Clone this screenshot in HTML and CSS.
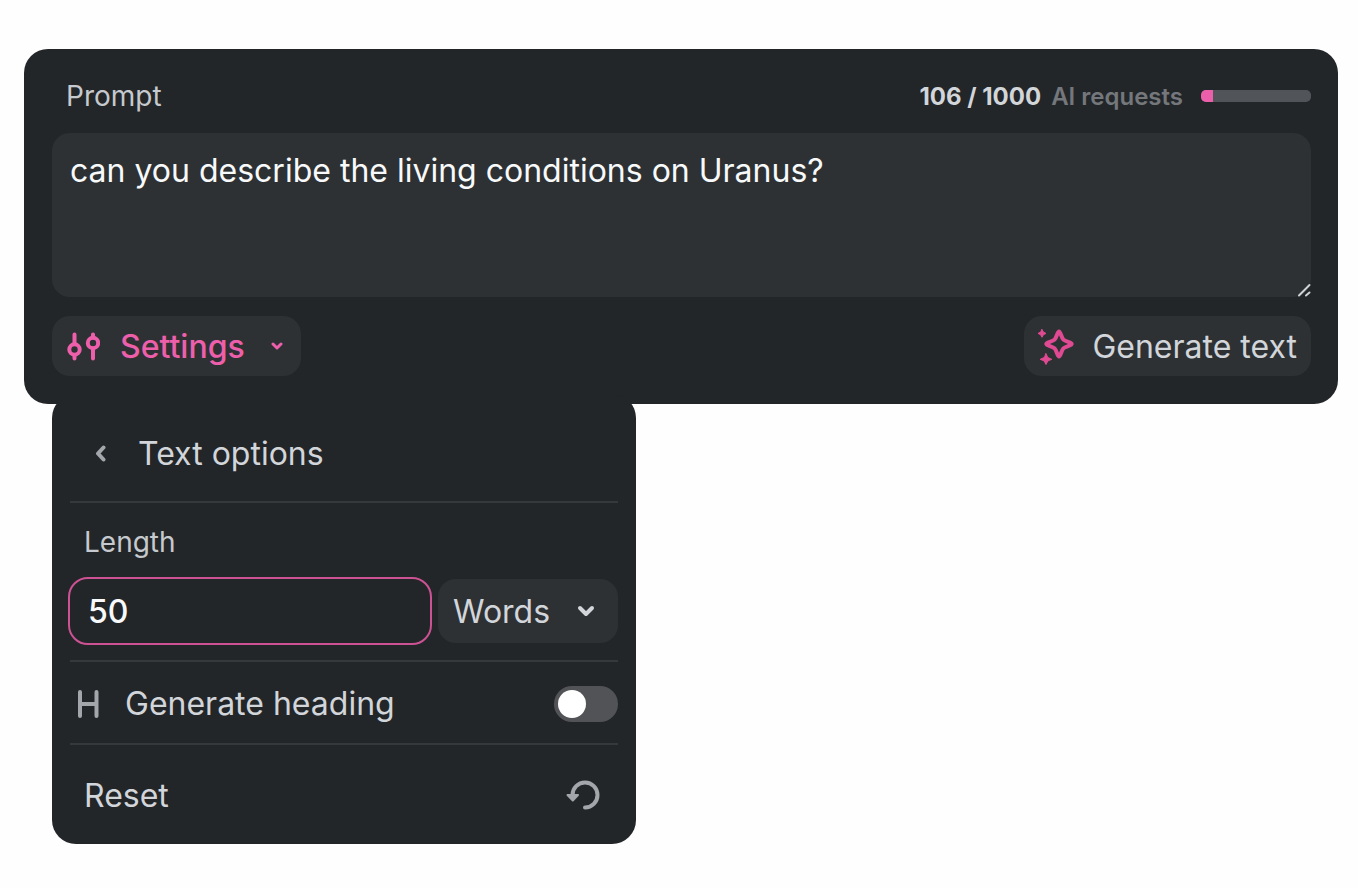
FILE: index.html
```html
<!DOCTYPE html>
<html lang="en">
<head>
<meta charset="utf-8">
<meta name="viewport" content="width=device-width, initial-scale=1">
<title>AI prompt</title>
<link rel="stylesheet" href="styles.css">
</head>
<body>
<main class="page">
  <section class="panel">
    <header class="panel-head">
      <label class="label" for="prompt">Prompt</label>
      <div class="usage">
        <span class="usage-text"><strong class="usage-count">106 / 1000</strong> AI requests</span>
        <div class="meter" role="progressbar" aria-label="AI requests used" aria-valuenow="106" aria-valuemin="0" aria-valuemax="1000">
          <div class="meter-fill" style="width: 10.6%"></div>
        </div>
      </div>
    </header>
    <div class="prompt-box">
      <textarea class="prompt" id="prompt" spellcheck="false">can you describe the living conditions on Uranus?</textarea>
      <svg class="grip" width="14" height="14" viewBox="0 0 14 14" aria-hidden="true"><path d="M2 12.500 12.500 2M9 12.500 12.500 9.500"/></svg>
    </div>
    <footer class="actions">
      <button class="btn btn-settings" type="button" aria-expanded="true">
        <svg class="icon-sliders" width="34" height="30" viewBox="0 0 34 30" aria-hidden="true"><circle cx="8.500" cy="17.500" r="5.200"/><circle cx="27" cy="11" r="5.200"/><path d="M8.500 2.500V12M8.500 23v3.500M27 2.500v3M27 16.500v10"/></svg>
        <span>Settings</span>
        <svg class="chevron-small" width="12" height="10" viewBox="0 0 12 10" aria-hidden="true"><path d="m2 2 4 4 4-4"/></svg>
      </button>
      <button class="btn btn-generate" type="button">
        <svg class="icon-sparkle" width="38" height="38" viewBox="0 0 38 38" aria-hidden="true"><path class="star" d="M21 3.500c1.600 0 2.300 6 4.400 8.100s8.300 2.700 8.300 4.300-6.200 2.400-8.300 4.500-2.800 8.100-4.400 8.100-2.300-6-4.400-8.100-8.300-2.900-8.300-4.500 6.200-2.200 8.300-4.300 2.800-8.100 4.400-8.100z"/><path class="spark" d="M4 1.500 5.400 4.100 8 5.400 5.400 6.700 4 9.300 2.600 6.700 0 5.400 2.600 4.100zM8 25.700l1.800 3.800 4 1.800-4 1.700-1.800 3.500-1.800-3.500-4-1.700 4-1.800z"/></svg>
        <span>Generate text</span>
      </button>
    </footer>
  </section>

  <section class="menu" aria-label="Text options">
    <header class="menu-head">
      <button class="back" type="button" aria-label="Back">
        <svg width="12" height="18" viewBox="0 0 12 18" aria-hidden="true"><path d="M9.500 2.500 4 8.500l5.500 6"/></svg>
      </button>
      <h2 class="menu-title">Text options</h2>
    </header>
    <div class="length">
      <label class="label length-label" for="length">Length</label>
      <div class="fields">
        <input class="amount" id="length" type="text" inputmode="numeric" value="50">
        <div class="unit-box">
          <select class="unit" aria-label="Length unit"><option>Words</option></select>
          <svg class="chevron" width="18" height="12" viewBox="0 0 18 12" aria-hidden="true"><path d="m3 3 6 6 6-6"/></svg>
        </div>
      </div>
    </div>
    <div class="heading-row">
      <svg class="icon-h" width="24" height="30" viewBox="0 0 24 30" aria-hidden="true"><path d="M4 3v24M20.500 3v24M4 15H20.500"/></svg>
      <label class="row-text" for="heading">Generate heading</label>
      <input class="toggle" id="heading" type="checkbox" role="switch">
    </div>
    <button class="reset" type="button">
      <span>Reset</span>
      <svg class="icon-reset" width="34" height="32" viewBox="0 0 34 32" aria-hidden="true"><path class="arc" d="M6.500 15A12.500 12.500 0 1 1 19 27.500"/><path class="head" d="M1.500 15h10.500l-5.200 5.500z"/></svg>
    </button>
  </section>
</main>
</body>
</html>
```

FILE: styles.css
```css
:root {
  --surface: #232629;
  --field: #2e3134;
  --line: #36393c;
  --text: #d2d5d9;
  --muted: #a3a6aa;
  --pink: #ee5fab;
}

* { box-sizing: border-box; }

body {
  margin: 0;
  background: #fefefe;
  color: var(--text);
  font-family: Inter, "Liberation Sans", sans-serif;
  font-size: 32px;
  line-height: 40px;
}

button, input, select, textarea {
  margin: 0;
  border: 0;
  color: inherit;
  font: inherit;
}

button { cursor: pointer; }

svg {
  display: block;
  flex: none;
  fill: none;
  stroke: currentColor;
  stroke-linecap: round;
  stroke-linejoin: round;
}

.page { padding: 49px 20px 45px 24px; }

.panel {
  padding: 27px 27px 28px 28px;
  border-radius: 24px;
  background: var(--surface);
}

.panel-head {
  display: flex;
  align-items: center;
  justify-content: space-between;
  padding-left: 14px;
  margin-bottom: 17px;
}

.label {
  font-size: 28px;
  color: #c6c9cd;
}

.usage {
  display: flex;
  align-items: center;
  gap: 18px;
}

.usage-text {
  padding-top: 2px;
  color: #74777b;
  font-size: 24px;
  font-weight: 600;
  line-height: 38px;
}

.usage-count {
  margin-right: 4px;
  color: var(--text);
  font-weight: 700;
}

.meter {
  width: 110px;
  height: 12px;
  overflow: hidden;
  border-radius: 5px;
  background: #515458;
}

.meter-fill {
  height: 100%;
  background: var(--pink);
}

.prompt-box {
  position: relative;
  margin-bottom: 19px;
}

.prompt {
  display: block;
  width: 100%;
  height: 164px;
  padding: 18px;
  border-radius: 18px;
  outline: 0;
  resize: none;
  background: var(--field);
  color: #f8f9fa;
}

.grip {
  position: absolute;
  right: 0;
  bottom: 0;
  color: #d0d2d4;
  stroke-width: 2;
}

.actions {
  display: flex;
  justify-content: space-between;
}

.btn {
  display: flex;
  align-items: center;
  height: 60px;
  padding: 2px 14px 0;
  border-radius: 18px;
  background: var(--field);
}

.btn-settings {
  gap: 20px;
  padding: 2px 18px 0 14px;
  color: var(--pink);
  font-weight: 500;
}

.icon-sliders { stroke-width: 4; }

.chevron-small {
  margin-left: 6px;
  stroke-width: 3;
}

.btn-generate { gap: 16px; }

.icon-sparkle {
  overflow: visible;
  color: #df4a92;
}

.star { stroke-width: 4; }

.spark {
  fill: currentColor;
  stroke-width: 1;
}

.menu {
  width: 584px;
  max-width: calc(100% - 56px);
  margin: -10px 28px 0;
  padding: 0 18px;
  border-radius: 24px;
  background: var(--surface);
}

.menu-head {
  display: flex;
  align-items: center;
  gap: 14px;
  padding: 40px 16px 27px 14px;
  border-bottom: 2px solid var(--line);
}

.back {
  display: grid;
  place-items: center;
  width: 40px;
  height: 40px;
  padding: 0 8px 0 0;
  background: none;
  color: var(--muted);
  stroke-width: 4;
}

.menu-title {
  margin: 0;
  font-size: 32px;
  font-weight: 400;
}

.length {
  padding: 19px 0 17px;
  border-bottom: 2px solid var(--line);
}

.length-label {
  display: block;
  padding-left: 14px;
  margin-bottom: 17px;
}

.fields {
  display: grid;
  grid-template-columns: 2fr 180px;
  gap: 8px;
}

.amount {
  width: 100%;
  height: 64px;
  padding: 0 18px;
  border-radius: 18px;
  outline: 2px solid #cc5294;
  background: var(--surface);
  color: #f8f9fa;
  font-weight: 500;
}

.unit-box { position: relative; }

.unit {
  width: 100%;
  height: 64px;
  padding: 2px 48px 0 15px;
  border-radius: 18px;
  appearance: none;
  background: var(--field);
}

.chevron {
  position: absolute;
  top: 26px;
  right: 23px;
  pointer-events: none;
  stroke-width: 4;
}

.heading-row {
  display: flex;
  align-items: center;
  padding: 22px 0 19px 6px;
  border-bottom: 2px solid var(--line);
}

.icon-h {
  margin-right: 25px;
  color: var(--muted);
  stroke-width: 4;
}

.row-text { flex: 1; }

.toggle {
  display: flex;
  align-items: center;
  width: 64px;
  height: 36px;
  padding: 0 4px;
  border-radius: 18px;
  appearance: none;
  background: #525357;
}

.toggle::before {
  width: 28px;
  height: 28px;
  border-radius: 50%;
  background: #fff;
  content: "";
}

.toggle:checked {
  justify-content: flex-end;
  background: var(--pink);
}

.reset {
  display: flex;
  align-items: center;
  justify-content: space-between;
  width: 100%;
  padding: 31px 18px 28px 14px;
  background: none;
}

.icon-reset { color: var(--muted); }

.arc { stroke-width: 4; }

.head {
  fill: currentColor;
  stroke-width: 2;
}
```
